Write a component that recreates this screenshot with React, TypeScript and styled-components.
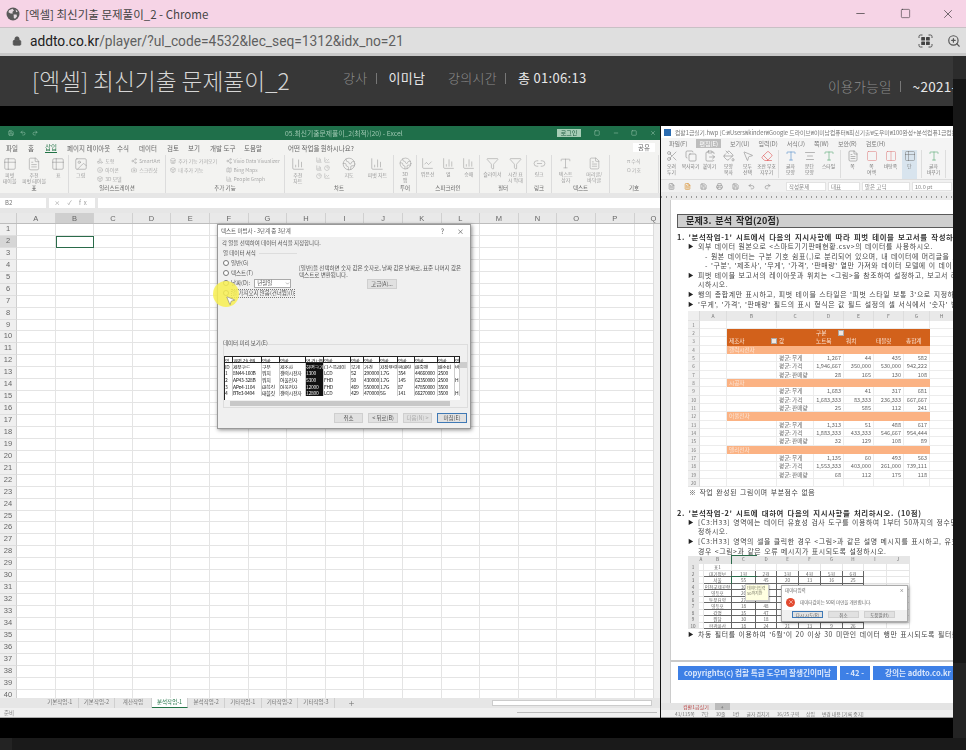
import * as React from 'react';
import styled, { createGlobalStyle } from 'styled-components';
import {
  BarChart3, Camera, ChevronDown, ClipboardPaste, Copy, FileText, Globe2, Image, Link2, LineChart, Lock, Map, Minus,
  MousePointer2, PaintBucket, PieChart, Plus, Printer, Save, Scissors, Share2, Shapes, Square, Table2, Type, X, ZoomIn,
  Filter, Columns2, Box, Store, Smile, Undo2, Redo2, AlignCenter, Eraser,
} from 'lucide-react';

const kr = `"Noto Sans CJK KR", "Noto Sans", sans-serif`;

const Global = createGlobalStyle`
  html, body { margin: 0; padding: 0; background: #1a1a1a; }
  body { font-family: ${kr}; }
  * { box-sizing: border-box; }
`;

const Page = styled.div`
  width: 966px;
  height: 750px;
  overflow: hidden;
  display: flex;
  flex-direction: column;
`;

/* ---------- chrome ---------- */
const TitleBar = styled.div`
  height: 28px;
  flex: none;
  background: #f6d4e6;
  border-bottom: 1px solid #c9c0c5;
  display: flex;
  align-items: center;
  padding-left: 6px;
  color: #444;
  font-size: 11.5px;
`;
const TabTitle = styled.span`
  margin-left: 5px;
  flex: 1;
`;
const WinButton = styled.div`
  width: 44px;
  padding-right: 11px;
  display: flex;
  justify-content: flex-end;
  color: #2a2a2a;
`;
const UrlBar = styled.div`
  height: 28px;
  flex: none;
  background: #dfdfdf;
  border-bottom: 3px solid #c8c8c8;
  display: flex;
  align-items: center;
  padding: 0 5px 0 12px;
  color: #5f5f5f;
  font-size: 13.75px;
  font-family: "Roboto", sans-serif;
`;
const UrlText = styled.span`
  margin-left: 8px;
  flex: 1;
  b { font-weight: 400; color: #222; }
`;
const UrlIcon = styled.div`
  margin-left: 14px;
  display: flex;
  color: #555;
`;

/* ---------- player ---------- */
const Stage = styled.div`
  flex: none;
  display: flex;
  height: 682px;
`;
const Main = styled.div`
  width: 953px;
  flex: none;
  display: flex;
  flex-direction: column;
  overflow: hidden;
`;
const Side = styled.div`
  flex: 1;
  display: flex;
  flex-direction: column;
`;
const SideBlock = styled.div<{ $h: number; $c: string }>`
  height: ${p => p.$h}px;
  background: ${p => p.$c};
`;
const PlayerHead = styled.div`
  height: 50px;
  flex: none;
  background: #373737;
  display: flex;
  align-items: flex-start;
  white-space: nowrap;
  color: #8c8c8c;
  font-size: 13px;
`;
const LessonTitle = styled.h1`
  margin: 9px 0 0 32px;
  width: 311px;
  flex: none;
  font-size: 22.7px;
  line-height: 32px;
  font-weight: 300;
  color: #d6d6d6;
`;
const Meta = styled.div<{ $w: number; $top: number; $size?: number }>`
  width: ${p => p.$w}px;
  flex: none;
  margin-top: ${p => p.$top}px;
  display: flex;
  align-items: center;
  line-height: 18px;
  font-size: ${p => p.$size ?? 13}px;
  font-weight: 300;
  letter-spacing: 0.3px;
`;
const MetaSep = styled.i`
  display: block;
  width: 1px;
  height: 11px;
  margin: 0 12px 0 8px;
  background: #777;
`;
const MetaValue = styled.b`
  font-weight: 400;
  color: #e8e8e8;
`;
const Gap = styled.div`
  height: 20px;
  flex: none;
  background: #000;
`;
const Video = styled.div`
  height: 592px;
  flex: none;
  display: flex;
  background: #111;
`;
const Bottom = styled.div`
  flex: 1;
  display: flex;
  background: #1a1a1a;
`;
const BottomLeft = styled.div`
  width: 12px;
  background: #232323;
`;

/* ---------- excel ---------- */
const Excel = styled.div`
  position: relative;
  width: 660px;
  flex: none;
  display: flex;
  flex-direction: column;
  overflow: hidden;
  background: #fff;
  filter: blur(0.55px);
  font-size: 6px;
  color: #777;
`;
const XlTitle = styled.div`
  height: 14px;
  flex: none;
  background: #1f6f4a;
  color: #9fc8b2;
  display: flex;
  align-items: center;
  padding-left: 8px;
  gap: 6px;
`;
const XlFileName = styled.span`
  margin-left: 241px;
  width: 266px;
  font-size: 6.8px;
`;
const LoginButton = styled.span`
  width: 24px;
  height: 8px;
  margin-right: 7px;
  background: #a7cdb6;
  color: #1f5c40;
  text-align: center;
  line-height: 8px;
`;
const XlWinIcons = styled.div`
  display: flex;
  gap: 12.5px;
`;
const XlTabs = styled.div`
  height: 15px;
  flex: none;
  background: #f3f3f1;
  display: flex;
  align-items: center;
  padding-left: 6px;
  font-size: 6.5px;
  color: #666;
  white-space: nowrap;
`;
const XlTab = styled.span<{ $w: number; $active?: boolean }>`
  width: ${p => p.$w}px;
  flex: none;
  span {
    display: inline-block;
    border-bottom: ${p => (p.$active ? '1px solid #217346' : 'none')};
    color: ${p => (p.$active ? '#217346' : 'inherit')};
    line-height: 9px;
  }
`;
const ShareBox = styled.span`
  margin-left: auto;
  margin-right: 5px;
  width: 22px;
  text-align: center;
  background: #fff;
  line-height: 9px;
`;
const XlRibbon = styled.div`
  height: 38px;
  flex: none;
  background: #f3f3f1;
  display: flex;
`;
const Group = styled.div<{ $w: number }>`
  width: ${p => p.$w}px;
  flex: none;
  display: flex;
  flex-direction: column;
  border-right: 1px solid #dcdcdc;
`;
const GroupBody = styled.div`
  flex: 1;
  display: flex;
  justify-content: space-around;
  overflow: hidden;
  padding-top: 2px;
  color: #9a9a9a;
`;
const GroupLabel = styled.div`
  height: 9px;
  text-align: center;
  line-height: 9px;
  font-size: 5.5px;
  color: #666;
  white-space: nowrap;
`;
const Tool = styled.div`
  display: flex;
  flex-direction: column;
  align-items: center;
  font-size: 5px;
  line-height: 6px;
  text-align: center;
  color: #999;
  white-space: pre;
  svg { margin-bottom: 1px; }
`;
const SmallCol = styled.div`
  display: flex;
  flex-direction: column;
  gap: 2px;
`;
const SmallTool = styled.div`
  display: flex;
  align-items: center;
  gap: 2px;
  font-size: 5px;
  line-height: 7px;
  color: #aaa;
  white-space: nowrap;
`;
const Band = styled.div<{ $h: number }>`
  height: ${p => p.$h}px;
  flex: none;
  background: #e6e6e6;
`;
const Formula = styled.div`
  height: 10px;
  flex: none;
  background: #e6e6e6;
  display: flex;
  gap: 3px;
  align-items: stretch;
  font-size: 6px;
`;
const NameBox = styled.div`
  width: 46px;
  padding-left: 5px;
  background: #fff;
  line-height: 10px;
`;
const FxBox = styled.div<{ $w?: number }>`
  width: ${p => (p.$w ? `${p.$w}px` : 'auto')};
  flex: ${p => (p.$w ? 'none' : 1)};
  background: #fff;
  text-align: center;
  line-height: 10px;
  color: #999;
  letter-spacing: 3px;
`;
const ColHeader = styled.div`
  height: 11px;
  flex: none;
  display: flex;
  background: #e9e9e9;
  border-bottom: 1px solid #bdbdbd;
`;
const Corner = styled.div`
  width: 17px;
  flex: none;
  border-right: 1px solid #ccc;
`;
const ColName = styled.div<{ $on?: boolean }>`
  width: 38.6px;
  flex: none;
  text-align: center;
  font-family: "Liberation Sans", sans-serif;
  font-size: 7.5px;
  line-height: 11px;
  color: #666;
  background: ${p => (p.$on ? '#cfcfcf' : 'transparent')};
  border-right: 1px solid #d0d0d0;
`;
const SheetArea = styled.div`
  height: 474px;
  flex: none;
  display: flex;
  overflow: hidden;
`;
const Rows = styled.div`
  flex: 1;
  overflow: hidden;
`;
const Row = styled.div`
  height: 11.95px;
  display: flex;
`;
const RowHead = styled.div<{ $on?: boolean }>`
  width: 17px;
  flex: none;
  background: ${p => (p.$on ? '#d6d6d6' : '#efefef')};
  border-right: 1px solid #cfcfcf;
  border-bottom: 1px solid #dedede;
  text-align: center;
  font-family: "Liberation Sans", sans-serif;
  font-size: 7.5px;
  line-height: 8px;
  padding-top: 1px;
  color: #666;
`;
const Cell = styled.div<{ $on?: boolean }>`
  width: 38.6px;
  flex: none;
  border-right: 1px solid #e4e4e4;
  border-bottom: 1px solid #e4e4e4;
  outline: ${p => (p.$on ? '1.5px solid #2a6b4a' : 'none')};
  outline-offset: -1px;
`;
const VScroll = styled.div`
  width: 7px;
  flex: none;
  background: #f0f0f0;
  border-left: 1px solid #ddd;
`;
const SheetTabs = styled.div`
  height: 10px;
  flex: none;
  background: #e6e6e6;
  display: flex;
  align-items: center;
  padding-left: 42px;
  font-size: 5.5px;
  color: #777;
`;
const SheetTab = styled.div<{ $active?: boolean }>`
  width: 36.6px;
  height: 10px;
  line-height: 9px;
  text-align: center;
  white-space: nowrap;
  border-right: 1px solid #cfcfcf;
  background: ${p => (p.$active ? '#fff' : 'transparent')};
  border-bottom: ${p => (p.$active ? '1px solid #217346' : 'none')};
  color: ${p => (p.$active ? '#217346' : 'inherit')};
`;
const AddSheet = styled.span`
  margin-left: 13px;
  display: flex;
`;
const HScroll = styled.div`
  width: 160px;
  height: 6px;
  margin-left: auto;
  margin-right: 8px;
  background: #fff;
  border: 1px solid #ccc;
`;
const XlStatus = styled.div`
  height: 10px;
  flex: none;
  background: #f0f0f0;
  border-bottom: 1px solid #aaa;
  display: flex;
  align-items: center;
  padding-left: 4px;
  font-size: 5.5px;
  color: #888;
  gap: 8px;
`;
const ZoomBar = styled.div`
  margin-left: auto;
  margin-right: 3px;
  width: 140px;
  height: 1px;
  background: #bbb;
`;

/* ---------- dialog ---------- */
const Dialog = styled.div`
  position: absolute;
  left: 217px;
  top: 98px;
  width: 254px;
  height: 205px;
  background: #f0f0f0;
  border: 1px solid #999;
  box-shadow: 1px 1px 4px rgba(0, 0, 0, 0.45);
  color: #555;
  font-size: 5.5px;
  line-height: 8px;
  display: flex;
  flex-direction: column;
  white-space: nowrap;
`;
const DialogTitle = styled.div`
  height: 12px;
  flex: none;
  background: #fff;
  display: flex;
  align-items: center;
  padding: 0 6px 0 3px;
`;
const DialogClose = styled.span`
  margin-left: auto;
  display: flex;
  gap: 13px;
  font-size: 7px;
`;
const Instruction = styled.div`
  margin: 2px 0 2px 4px;
`;
const Legend = styled.div`
  margin-left: 5px;
  display: flex;
  align-items: center;
  gap: 3px;
  &::after { content: ''; width: 38px; height: 1px; background: #ddd; }
`;
const OptionsRow = styled.div`
  height: 82px;
  flex: none;
  display: flex;
`;
const Options = styled.div`
  width: 81px;
  flex: none;
  padding: 1px 0 0 5px;
`;
const Option = styled.div<{ $dotted?: boolean }>`
  height: 10px;
  display: flex;
  align-items: center;
  gap: 2px;
  span { border: ${p => (p.$dotted ? '1px dotted #777' : 'none')}; line-height: 7px; }
`;
const Radio = styled.i`
  display: block;
  width: 6px;
  height: 6px;
  border-radius: 50%;
  background: #fff;
  border: 1px solid #777;
`;
const SelectBox = styled.div`
  width: 37px;
  height: 9px;
  margin-left: 2px;
  padding-left: 2px;
  background: #fff;
  border: 1px solid #aaa;
  display: flex;
  align-items: center;
  justify-content: space-between;
`;
const Description = styled.div`
  padding-top: 8px;
  line-height: 6.5px;
  white-space: pre;
  font-size: 5.55px;
`;
const FlatButton = styled.div<{ $w: number; $primary?: boolean; $off?: boolean }>`
  width: ${p => p.$w}px;
  height: 10px;
  background: #e1e1e1;
  border: 1px solid ${p => (p.$primary ? '#3f79b5' : '#cfcfcf')};
  color: ${p => (p.$off ? '#aaa' : '#555')};
  text-align: center;
  line-height: 8px;
  white-space: nowrap;
`;
const AdvancedWrap = styled.div`
  margin: 1px 0 0 68px;
`;
const PreviewLabel = styled.div`
  position: relative;
  margin: 0 0 -3px 5px;
  height: 8px;
  line-height: 8px;
`;
const PreviewBox = styled.div`
  margin: 0 2px 0 5px;
  height: 64px;
  flex: none;
  border: 1px solid #ddd;
  padding-top: 11px;
  display: flex;
`;
const PreviewBody = styled.div`
  width: 236px;
`;
const PreviewGrid = styled.div`
  display: grid;
  grid-template-columns: 8px 29px 18px 26px 18px 27px 13px 16px 18px 17px 23px 17px 5px;
  grid-auto-rows: 6.7px;
  height: 44px;
  overflow: hidden;
  background: #fff;
  font-size: 5px;
  line-height: 7px;
  letter-spacing: -0.3px;
  color: #222;
  border-left: 1px solid #222;
`;
const PreviewCell = styled.div<{ $head?: boolean; $black?: boolean }>`
  white-space: nowrap;
  background: ${p => (p.$black ? '#111' : '#fff')};
  color: ${p => (p.$black ? '#eee' : '#222')};
  border-right: ${p => (p.$head ? '1px solid #222' : '1px solid #ccc')};
  border-top: ${p => (p.$head ? '1px solid #222' : 'none')};
  border-bottom: ${p => (p.$head ? '1px solid #222' : 'none')};
`;
const PreviewScroll = styled.div`
  height: 5px;
  margin: 1px 10px 0 6px;
  background: #c8c8c8;
`;
const PreviewV = styled.div`
  width: 7px;
  height: 44px;
  background: #f0f0f0;
  &::after { content: ''; display: block; height: 6px; margin-top: 6px; background: #cdcdcd; }
`;
const DialogFoot = styled.div`
  margin-top: 5px;
  padding-left: 116px;
  display: flex;
  gap: 5px;
`;
const Highlight = styled.div`
  position: absolute;
  left: -5px;
  top: 56px;
  width: 26px;
  height: 26px;
  border-radius: 50%;
  background: rgba(247, 238, 80, 0.85);
`;
const Pointer = styled.div`
  position: absolute;
  left: 7px;
  top: 70px;
  color: #555;
  display: flex;
`;

/* ---------- hwp ---------- */
const Hwp = styled.div`
  margin-left: 1px;
  flex: 1;
  min-width: 0;
  display: flex;
  flex-direction: column;
  overflow: hidden;
  background: #fff;
  filter: blur(0.5px);
  font-size: 6px;
  color: #666;
`;
const HwpTitle = styled.div`
  height: 12px;
  flex: none;
  padding-left: 3px;
  background: #fff;
  display: flex;
  align-items: center;
  gap: 4px;
  font-size: 5.8px;
  color: #777;
  white-space: nowrap;
`;
const HwpLogo = styled.i`
  display: block;
  width: 7px;
  height: 7px;
  flex: none;
  background: #2a6bb0;
`;
const HwpMenu = styled.div`
  height: 10px;
  flex: none;
  display: flex;
  align-items: center;
  padding-left: 8px;
  gap: 9px;
  background: #f4f4f4;
  font-size: 6px;
  color: #777;
  white-space: nowrap;
`;
const MenuItem = styled.span<{ $on?: boolean }>`
  padding: 0 3px;
  line-height: 9px;
  background: ${p => (p.$on ? '#bdbdbd' : 'transparent')};
  color: ${p => (p.$on ? '#fff' : 'inherit')};
`;
const HwpRibbon = styled.div`
  height: 32px;
  flex: none;
  display: flex;
  align-items: flex-start;
  gap: 4px;
  padding: 2px 0 0 3px;
  background: #f4f4f4;
  border-bottom: 1px solid #ddd;
`;
const HwpTool = styled(Tool)<{ $on?: boolean }>`
  width: 15px;
  height: 29px;
  flex: none;
  font-size: 4.8px;
  color: #777;
  background: ${p => (p.$on ? '#d8e4ee' : 'transparent')};
`;
const HwpSep = styled.i`
  display: block;
  width: 1px;
  height: 28px;
  flex: none;
  background: #ddd;
`;
const HwpToolbar = styled.div`
  height: 12px;
  flex: none;
  display: flex;
  align-items: center;
  gap: 9px;
  padding: 0 1px 0 7px;
  background: #f1f1f1;
  color: #888;
  font-size: 5.5px;
  white-space: nowrap;
`;
const ToolFields = styled.div`
  margin-left: auto;
  display: flex;
  gap: 2px;
`;
const ToolField = styled.div<{ $w: number }>`
  width: ${p => p.$w}px;
  flex: none;
  height: 9px;
  line-height: 8px;
  padding-left: 2px;
  background: #fff;
  border: 1px solid #e2e2e2;
  overflow: hidden;
`;
const Ruler = styled.div`
  height: 8px;
  flex: none;
  background: repeating-linear-gradient(90deg, #999 0 1px, transparent 1px 5px) 0 4px / 100% 2px no-repeat, #eaeaea;
`;
const DocArea = styled.div`
  height: 503px;
  flex: none;
  display: flex;
  overflow: hidden;
  background: #fff;
`;
const DocMargin = styled.div`
  width: 10px;
  flex: none;
  background: #e9e9e9;
  border-right: 1px solid #ccc;
`;
const Sheet = styled.div`
  position: relative;
  flex: 1;
  min-width: 0;
  padding: 14px 0 0 6px;
  overflow: hidden;
  color: #444;
  white-space: nowrap;
`;
const Heading = styled.div`
  height: 14px;
  width: 300px;
  padding-left: 8px;
  background: #cfcfcf;
  border: 1px solid #5a5a5a;
  color: #222;
  font-size: 9px;
  font-weight: 700;
  line-height: 12px;
  letter-spacing: 0.2px;
  word-spacing: 1.5px;
`;
const Question = styled.div<{ $top: number }>`
  margin-top: ${p => p.$top}px;
  height: 10px;
  font-size: 7.4px;
  font-weight: 700;
  line-height: 10px;
  color: #333;
  letter-spacing: 0.6px;
  word-spacing: 1.3px;
`;
const Line = styled.div<{ $indent?: number; $bullet?: boolean }>`
  position: relative;
  height: 9.6px;
  line-height: 9.6px;
  font-size: 6.9px;
  letter-spacing: 0.6px;
  word-spacing: 0.8px;
  padding-left: ${p => p.$indent ?? 21}px;
  &::before {
    content: '${p => (p.$bullet ? '▶' : '')}';
    position: absolute;
    left: 11px;
    font-size: 5.5px;
    color: #222;
  }
`;
const Note = styled(Line)`
  margin-top: 1px;
  height: 9.6px;
  padding-left: 12px;
`;
const Pivot = styled.div`
  margin: 2px 0 0 11px;
  width: 266px;
  display: grid;
  grid-template-columns: 12px 27px 50px 37px 30px 30px 30px 26px 24px;
  grid-template-rows: 9.5px repeat(20, 8.33px);
  font-size: 5.6px;
  line-height: 8.2px;
`;
const PivotHead = styled.div`
  background: #e9e9e9;
  text-align: center;
  color: #777;
  font-size: 5px;
  line-height: 9.5px;
  border-right: 1px solid #ddd;
`;
const PivotNum = styled.div`
  background: #efefef;
  text-align: center;
  font-size: 4.6px;
  color: #777;
  border-bottom: 1px solid #e2e2e2;
  border-right: 1px solid #d8d8d8;
`;
const PivotCell = styled.div<{ $tone?: 'dark' | 'light'; $right?: boolean }>`
  position: relative;
  background: ${p => (p.$tone === 'dark' ? '#d2611b' : p.$tone === 'light' ? '#fbb283' : '#fff')};
  color: ${p => (p.$tone ? '#fbe6d8' : '#666')};
  text-align: ${p => (p.$right ? 'right' : 'left')};
  padding: 0 2px;
  border-right: ${p => (p.$tone ? 'none' : '1px solid #ececec')};
  border-bottom: ${p => (p.$tone ? 'none' : '1px solid #ececec')};
`;
const FilterBtn = styled.i`
  position: absolute;
  right: 0;
  top: 1px;
  width: 6px;
  height: 6px;
  background: #f1e7e0;
  border: 1px solid #aaa;
`;
const SmallSheetWrap = styled.div`
  position: relative;
  margin: 0 0 1px 11px;
  width: 222px;
  height: 73px;
`;
const SmallSheet = styled.div`
  display: grid;
  grid-template-columns: 11px 5px 28px 24px 21px 22px 22px 22px 21px 23px 23px;
  grid-template-rows: 8px repeat(10, 6.5px);
  font-size: 4.6px;
  line-height: 6.3px;
  color: #666;
`;
const SmallCell = styled.div<{ $head?: boolean; $box?: boolean; $sel?: boolean }>`
  text-align: center;
  white-space: nowrap;
  background: ${p => (p.$head ? '#e6e6e6' : '#fff')};
  border-right: 1px solid ${p => (p.$box ? '#666' : '#e6e6e6')};
  border-bottom: 1px solid ${p => (p.$box ? '#666' : '#e6e6e6')};
  outline: ${p => (p.$sel ? '1px solid #2a6b4a' : 'none')};
`;
const InputTip = styled.div`
  position: absolute;
  left: 57px;
  top: 28px;
  width: 24px;
  height: 17px;
  background: #ffffe1;
  border: 1px solid #ccc;
  padding: 1px;
  font-size: 4px;
  line-height: 5px;
  color: #776;
  box-shadow: 1px 1px 1px rgba(0, 0, 0, 0.2);
`;
const ErrorBox = styled.div`
  position: absolute;
  left: 93px;
  top: 29px;
  width: 127px;
  height: 37px;
  background: #fff;
  border: 1px solid #aaa;
  box-shadow: 1px 1px 3px rgba(0, 0, 0, 0.4);
  font-size: 4.5px;
  color: #666;
  display: flex;
  flex-direction: column;
`;
const ErrorTitle = styled.div`
  height: 8px;
  padding: 0 3px;
  display: flex;
  justify-content: space-between;
  line-height: 8px;
`;
const ErrorMessage = styled.div`
  flex: 1;
  display: flex;
  align-items: center;
  gap: 5px;
  padding-left: 4px;
`;
const ErrorDot = styled.i`
  display: flex;
  align-items: center;
  justify-content: center;
  width: 9px;
  height: 9px;
  border-radius: 50%;
  background: #e2492f;
  color: #fff;
`;
const ErrorButtons = styled.div`
  height: 11px;
  flex: none;
  background: #f0f0f0;
  display: flex;
  gap: 5px;
  padding: 1px 0 0 10px;
`;
const ErrorButton = styled.div<{ $primary?: boolean }>`
  width: 31px;
  height: 7px;
  line-height: 6px;
  text-align: center;
  background: #e1e1e1;
  border: 1px solid ${p => (p.$primary ? '#3f79b5' : '#d0d0d0')};
`;
const FootRule = styled.div`
  margin: 20px 0 0 -6px;
  height: 2px;
  background: #c9c9c9;
`;
const FootRow = styled.div`
  margin-top: 4px;
  padding-left: 1px;
  display: flex;
  gap: 3px;
`;
const FootBlock = styled.div<{ $w: number }>`
  width: ${p => p.$w}px;
  flex: none;
  height: 14px;
  background: #3e80e6;
  color: #dbe7fb;
  font-size: 7.6px;
  font-weight: 700;
  line-height: 14px;
  text-align: center;
`;
const HwpTabs = styled.div`
  height: 7px;
  flex: none;
  background: #e4e4e4;
  display: flex;
  align-items: center;
  padding-left: 22px;
  font-size: 5px;
  color: #b44;
`;
const HwpTabAdd = styled.span`
  margin-left: 6px;
  padding: 0 6px;
  background: #bbb;
  color: #555;
  line-height: 7px;
`;
const HwpStatus = styled.div`
  height: 8px;
  flex: none;
  background: #efefef;
  border-bottom: 1px solid #999;
  display: flex;
  align-items: center;
  gap: 7px;
  padding-left: 14px;
  font-size: 4.8px;
  color: #777;
  white-space: nowrap;
`;

/* ---------- data ---------- */
const letters = 'ABCDEFGHIJKLMNOPQ'.split('');
const tabs: [string, number, boolean?][] = [
  ['파일', 22], ['홈', 17], ['삽입', 22, true], ['페이지 레이아웃', 50], ['수식', 22], ['데이터', 28], ['검토', 21], ['보기', 22],
  ['개발 도구', 34], ['도움말', 34], ['', 10], ['어떤 작업을 원하시나요?', 80],
];
const sheets = ['기본작업-1', '기본작업-2', '계산작업', '분석작업-1', '분석작업-2', '기타작업-1', '기타작업-2', '기타작업-3'];
const previewRows = [
  ['일', '개별 건너뜀', '일반', '일반', '열 건너뜀', '일반', '일반', '일반', '일반', '일반', '일반', '일반', '일'],
  ['ID', '제품코드', '구분', '제조사', '화면크기', '디스플레이', '무게', '가격', '저장용량', '판매량', '매출액', '배송비', '반'],
  ['1', '8N44-160B', '워치', '갤럭시전자', '1300', 'LCD', '52', '290000', '1.7G', '354', '44660000', '2500', ''],
  ['2', 'AP43-328B', '워치', '어울전자', '5300', 'FHD', '50', '430000', '1.7G', '145', '62350000', '2500', 'H'],
  ['3', 'APe4-1104', '태블릿', '어울전자', '12000', 'FHD', '469', '550000', '1.7G', '87', '47850000', '3500', ''],
  ['4', 'BTe3-0404', '태블릿', '갤럭시전자', '12800', 'LCD', '429', '470000', '5G', '141', '66270000', '3500', 'H'],
];
const pivotGroups: [string, string[][]][] = [
  ['갤럭시전자', [['평균: 무게', '1,267', '44', '435', '582'], ['평균: 가격', '1,946,667', '350,000', '530,000', '942,222'], ['평균: 판매량', '28', '165', '130', '108']]],
  ['시공자', [['평균: 무게', '1,683', '41', '317', '681'], ['평균: 가격', '1,683,333', '83,333', '236,333', '667,667'], ['평균: 판매량', '25', '585', '112', '241']]],
  ['어울전자', [['평균: 무게', '1,313', '51', '488', '617'], ['평균: 가격', '1,883,333', '433,333', '546,667', '954,444'], ['평균: 판매량', '32', '129', '108', '89']]],
  ['델리전자', [['평균: 무게', '1,135', '60', '493', '563'], ['평균: 가격', '1,553,333', '403,000', '261,000', '739,111'], ['평균: 판매량', '68', '112', '175', '118']]],
];
const smallRows = [
  ['', '표1', '', '', '', '', '', '', '', ''],
  ['', '대기정보', '1월', '2월', '3월', '4월', '5월', '6월', '', ''],
  ['', '서울', '55', '45', '20', '13', '16', '25', '', ''],
  ['', '인천국제공항', '30', '', '', '', '', '', '', ''],
  ['', '영등포', '26', '', '', '', '', '', '', ''],
  ['', '동북요양', '27', '', '', '', '', '', '', ''],
  ['', '영등포', '18', '48', '', '', '', '', '', ''],
  ['', '강명', '35', '47', '', '', '', '', '', ''],
  ['', '원당', '30', '18', '', '', '', '', '', ''],
  ['', '판관마산', '18', '24', '21', '13', '9', '26', '', ''],
];

function GlobeIcon() {
  return (
    <svg width="14" height="14" viewBox="0 0 14 14">
      <circle cx="7" cy="7" r="6.5" fill="#5a5a5a" />
      <path d="M3 3.2 6.5 1.8 8 3.4 6.4 5 6.8 6.4 4.6 6.6 2.4 5.2Z" fill="#e6dbe1" />
      <path d="M7.6 7.4 10.6 7.6 11 9.6 8.8 12 7.8 10.2Z" fill="#e6dbe1" />
      <path d="M9.6 2.6 11.8 4.6 10.2 5.2Z" fill="#e6dbe1" />
    </svg>
  );
}

function ScanIcon() {
  return (
    <svg width="15" height="14" viewBox="0 0 15 14" fill="none" stroke="#555" strokeWidth="1">
      <path d="M1 4V2.5Q1 1 2.5 1H4.5M10.5 1H12.5Q14 1 14 2.5V4M14 10V11.5Q14 13 12.5 13H10.5M4.5 13H2.5Q1 13 1 11.5V10" />
      <g fill="#444" stroke="none">
        <rect x="3.2" y="3" width="3.8" height="3.5" rx=".6" />
        <rect x="8" y="3" width="3.8" height="3.5" rx=".6" />
        <rect x="3.2" y="7.5" width="3.8" height="3.5" rx=".6" />
        <rect x="8" y="7.5" width="3.8" height="3.5" rx=".6" />
      </g>
    </svg>
  );
}

function PivotSheet() {
  const blank = (k: string) => <PivotCell key={k} />;
  const rows: React.ReactNode[] = [];
  let n = 5;
  pivotGroups.forEach(([name, lines], g) => {
    const hn = n - 1;
    rows.push(
      <PivotNum key={`n${hn}`}>{hn}</PivotNum>, blank(`a${hn}`),
      <PivotCell key={`b${hn}`} $tone="light">{name}</PivotCell>,
      ...[0, 1, 2, 3, 4].map(i => <PivotCell key={`l${g}${i}`} $tone="light" />),
      blank(`h${hn}`),
    );
    lines.forEach(l => {
      const r = n++;
      rows.push(
        <PivotNum key={`n${r}`}>{r}</PivotNum>, blank(`a${r}`), blank(`b${r}`),
        ...l.map((v, i) => <PivotCell key={`c${r}${i}`} $right={i > 0}>{v}</PivotCell>),
        blank(`h${r}`),
      );
    });
    n++;
  });
  return (
    <Pivot>
      <PivotNum />
      {letters.slice(0, 8).map(l => <PivotHead key={l}>{l}</PivotHead>)}
      <PivotNum>1</PivotNum>
      {letters.slice(0, 8).map(l => <PivotCell key={`r1${l}`} />)}
      <PivotNum>2</PivotNum>
      <PivotCell />
      <PivotCell $tone="dark" /><PivotCell $tone="dark" />
      <PivotCell $tone="dark">구분<FilterBtn /></PivotCell>
      <PivotCell $tone="dark" /><PivotCell $tone="dark" /><PivotCell $tone="dark" />
      <PivotCell />
      <PivotNum>3</PivotNum>
      <PivotCell />
      <PivotCell $tone="dark">제조사<FilterBtn /></PivotCell>
      <PivotCell $tone="dark">값</PivotCell>
      <PivotCell $tone="dark">노트북</PivotCell>
      <PivotCell $tone="dark">워치</PivotCell>
      <PivotCell $tone="dark">태블릿</PivotCell>
      <PivotCell $tone="dark">총합계</PivotCell>
      <PivotCell />
      {rows}
      <PivotNum>20</PivotNum>
      {letters.slice(0, 8).map(l => <PivotCell key={`r20${l}`} />)}
    </Pivot>
  );
}

export default function App() {
  return (
    <Page>
      <Global />
      <TitleBar>
        <GlobeIcon />
        <TabTitle>[엑셀] 최신기출 문제풀이_2 - Chrome</TabTitle>
        <WinButton><Minus size={13} strokeWidth={1.2} /></WinButton>
        <WinButton><Square size={11} strokeWidth={1.2} /></WinButton>
        <WinButton><X size={14} strokeWidth={1.1} /></WinButton>
      </TitleBar>
      <UrlBar>
        <Lock size={10} fill="#555" color="#555" />
        <UrlText><b>addto.co.kr</b>/player/?ul_code=4532&amp;lec_seq=1312&amp;idx_no=21</UrlText>
        <UrlIcon><ScanIcon /></UrlIcon>
        <UrlIcon><ZoomIn size={14} /></UrlIcon>
      </UrlBar>
      <Stage>
        <Main>
          <PlayerHead>
            <LessonTitle>[엑셀] 최신기출 문제풀이_2</LessonTitle>
            <Meta $w={105} $top={13}>강사<MetaSep /><MetaValue>이미남</MetaValue></Meta>
            <Meta $w={380} $top={13}>강의시간<MetaSep /><MetaValue>총 01:06:13</MetaValue></Meta>
            <Meta $w={140} $top={21} $size={13.5}>이용가능일<MetaSep /><MetaValue>~2021-</MetaValue></Meta>
          </PlayerHead>
          <Gap />
          <Video>
            <Excel>
              <XlTitle>
                <Save size={6} /><Undo2 size={6} /><Redo2 size={6} />
                <XlFileName>05.최신기출문제풀이_2(최적)(20) - Excel</XlFileName>
                <LoginButton>로그인</LoginButton>
                <XlWinIcons>
                  <Square size={6} /><Minus size={6} /><Square size={6} /><X size={6} />
                </XlWinIcons>
              </XlTitle>
              <XlTabs>
                {tabs.map(([t, w, on], i) => (
                  <XlTab key={i} $w={w} $active={on}><span>{t}</span></XlTab>
                ))}
                <ShareBox>공유</ShareBox>
              </XlTabs>
              <XlRibbon>
                <Group $w={69}>
                  <GroupBody>
                    <Tool><Table2 size={14} strokeWidth={1} />{'피벗\n테이블'}</Tool>
                    <Tool><FileText size={14} strokeWidth={1} />{'추천\n피벗 테이블'}</Tool>
                    <Tool><Table2 size={14} strokeWidth={1} />표</Tool>
                  </GroupBody>
                  <GroupLabel>표</GroupLabel>
                </Group>
                <Group $w={97}>
                  <GroupBody>
                    <Tool><Image size={14} strokeWidth={1} />그림</Tool>
                    <SmallCol>
                      <SmallTool><Shapes size={6} />도형</SmallTool>
                      <SmallTool><Smile size={6} />아이콘</SmallTool>
                      <SmallTool><Box size={6} />3D 모델</SmallTool>
                    </SmallCol>
                    <SmallCol>
                      <SmallTool><Share2 size={6} />SmartArt</SmallTool>
                      <SmallTool><Camera size={6} />스크린샷</SmallTool>
                    </SmallCol>
                  </GroupBody>
                  <GroupLabel>일러스트레이션</GroupLabel>
                </Group>
                <Group $w={119}>
                  <GroupBody>
                    <SmallCol>
                      <SmallTool><Store size={6} />추가 기능 가져오기</SmallTool>
                      <SmallTool><Box size={6} />내 추가 기능</SmallTool>
                    </SmallCol>
                    <SmallCol>
                      <SmallTool><Share2 size={6} />Visio Data Visualizer</SmallTool>
                      <SmallTool><Map size={6} />Bing Maps</SmallTool>
                      <SmallTool><BarChart3 size={6} />People Graph</SmallTool>
                    </SmallCol>
                  </GroupBody>
                  <GroupLabel>추가 기능</GroupLabel>
                </Group>
                <Group $w={109}>
                  <GroupBody>
                    <Tool><BarChart3 size={14} strokeWidth={1} />{'추천\n차트'}</Tool>
                    <SmallCol>
                      <SmallTool><BarChart3 size={6} /><LineChart size={6} /></SmallTool>
                      <SmallTool><BarChart3 size={6} /><PieChart size={6} /></SmallTool>
                      <SmallTool><PieChart size={6} /><LineChart size={6} /></SmallTool>
                    </SmallCol>
                    <Tool><Globe2 size={14} strokeWidth={1} />지도</Tool>
                    <Tool><BarChart3 size={14} strokeWidth={1} />피벗 차트</Tool>
                  </GroupBody>
                  <GroupLabel>차트</GroupLabel>
                </Group>
                <Group $w={23}>
                  <GroupBody><Tool><Globe2 size={13} strokeWidth={1} />{'3D\n맵'}</Tool></GroupBody>
                  <GroupLabel>투어</GroupLabel>
                </Group>
                <Group $w={63}>
                  <GroupBody>
                    <Tool><LineChart size={13} strokeWidth={1} />꺾은선</Tool>
                    <Tool><BarChart3 size={13} strokeWidth={1} />열</Tool>
                    <Tool><BarChart3 size={13} strokeWidth={1} />{'승패'}</Tool>
                  </GroupBody>
                  <GroupLabel>스파크라인</GroupLabel>
                </Group>
                <Group $w={47}>
                  <GroupBody>
                    <Tool><Filter size={13} strokeWidth={1} />슬라이서</Tool>
                    <Tool><Filter size={13} strokeWidth={1} />{'시간 표\n시 막대'}</Tool>
                  </GroupBody>
                  <GroupLabel>필터</GroupLabel>
                </Group>
                <Group $w={25}>
                  <GroupBody><Tool><Link2 size={13} strokeWidth={1} />링크</Tool></GroupBody>
                  <GroupLabel>링크</GroupLabel>
                </Group>
                <Group $w={58}>
                  <GroupBody>
                    <Tool><Type size={13} strokeWidth={1} />{'텍스트\n상자'}</Tool>
                    <Tool><FileText size={13} strokeWidth={1} />{'머리글/\n바닥글'}</Tool>
                  </GroupBody>
                  <GroupLabel>텍스트</GroupLabel>
                </Group>
                <Group $w={49}>
                  <GroupBody>
                    <SmallCol>
                      <SmallTool>π 수식</SmallTool>
                      <SmallTool>Ω 기호</SmallTool>
                    </SmallCol>
                  </GroupBody>
                  <GroupLabel>기호</GroupLabel>
                </Group>
              </XlRibbon>
              <Band $h={5} />
              <Formula>
                <NameBox>B2</NameBox>
                <FxBox $w={46}>× ✓ fx</FxBox>
                <FxBox />
              </Formula>
              <Band $h={5} />
              <ColHeader>
                <Corner />
                {letters.map(l => <ColName key={l} $on={l === 'B'}>{l}</ColName>)}
              </ColHeader>
              <SheetArea>
                <Rows>
                  {Array.from({ length: 40 }, (_, r) => (
                    <Row key={r}>
                      <RowHead $on={r === 1}>{r + 1}</RowHead>
                      {letters.map(l => <Cell key={l} $on={r === 1 && l === 'B'} />)}
                    </Row>
                  ))}
                </Rows>
                <VScroll />
              </SheetArea>
              <SheetTabs>
                {sheets.map((s, i) => <SheetTab key={s} $active={i === 3}>{s}</SheetTab>)}
                <AddSheet><Plus size={7} /></AddSheet>
                <HScroll />
              </SheetTabs>
              <XlStatus>
                <span>준비</span>
                <ZoomBar />
              </XlStatus>
              <Dialog>
                <DialogTitle>
                  텍스트 마법사 - 3단계 중 3단계
                  <DialogClose><span>?</span><span>×</span></DialogClose>
                </DialogTitle>
                <Instruction>각 열을 선택하여 데이터 서식을 지정합니다.</Instruction>
                <Legend>열 데이터 서식</Legend>
                <OptionsRow>
                  <Options>
                    <Option><Radio />일반(G)</Option>
                    <Option><Radio />텍스트(T)</Option>
                    <Option><Radio />날짜(D):<SelectBox>년월일<ChevronDown size={5} /></SelectBox></Option>
                    <Option $dotted><Radio /><span>열 가져오지 않음(건너뜀)(I)</span></Option>
                  </Options>
                  <div>
                    <Description>{'[일반]을 선택하면 숫자 값은 숫자로, 날짜 값은 날짜로, 표준 나머지 값은\n텍스트로 변환됩니다.'}</Description>
                    <AdvancedWrap><FlatButton $w={30}>고급(A)...</FlatButton></AdvancedWrap>
                  </div>
                </OptionsRow>
                <PreviewLabel>데이터 미리 보기(E)</PreviewLabel>
                <PreviewBox>
                  <PreviewBody>
                    <PreviewGrid>
                      {previewRows.flatMap((row, r) =>
                        row.map((v, c) => (
                          <PreviewCell key={`${r}-${c}`} $head={r === 0} $black={c === 4 && r > 0}>{v}</PreviewCell>
                        )),
                      )}
                    </PreviewGrid>
                    <PreviewScroll />
                  </PreviewBody>
                  <PreviewV />
                </PreviewBox>
                <DialogFoot>
                  <FlatButton $w={29}>취소</FlatButton>
                  <FlatButton $w={30}>&lt; 뒤로(B)</FlatButton>
                  <FlatButton $w={29} $off>다음(N) &gt;</FlatButton>
                  <FlatButton $w={30} $primary>마침(E)</FlatButton>
                </DialogFoot>
                <Highlight />
                <Pointer><MousePointer2 size={11} fill="#fff" strokeWidth={1} /></Pointer>
              </Dialog>
            </Excel>
            <Hwp>
              <HwpTitle>
                <HwpLogo />
                컴활1급실기.hwp [C:₩Users₩kinder₩Google 드라이브₩이미남컴퓨터₩최신기출₩도우미₩100완성+분석컴퓨1급컴활완성₩]
              </HwpTitle>
              <HwpMenu>
                <span>파일(F)</span>
                <MenuItem $on>편집(E)</MenuItem>
                <span>보기(U)</span>
                <span>입력(D)</span>
                <span>서식(J)</span>
                <span>쪽(W)</span>
                <span>보안(R)</span>
                <span>검토(H)</span>
              </HwpMenu>
              <HwpRibbon>
                <HwpTool><Scissors size={12} strokeWidth={1} />{'오려\n두기'}</HwpTool>
                <HwpTool><Copy size={12} strokeWidth={1} />복사하기</HwpTool>
                <HwpTool><ClipboardPaste size={12} strokeWidth={1} />붙이기</HwpTool>
                <HwpTool><PaintBucket size={12} strokeWidth={1} />{'모양\n복사'}</HwpTool>
                <HwpTool><MousePointer2 size={12} strokeWidth={1} />{'모두\n선택'}</HwpTool>
                <HwpTool><Eraser size={12} strokeWidth={1} color="#d33" />{'조판 부호\n지우기'}</HwpTool>
                <HwpSep />
                <HwpTool><Type size={12} strokeWidth={1} color="#3478c0" />{'글자\n모양'}</HwpTool>
                <HwpTool><AlignCenter size={12} strokeWidth={1} />{'문단\n모양'}</HwpTool>
                <HwpTool><Type size={12} strokeWidth={1} color="#3a9a5a" />스타일</HwpTool>
                <HwpSep />
                <HwpTool><FileText size={12} strokeWidth={1} />쪽</HwpTool>
                <HwpTool><Square size={12} strokeWidth={1} color="#d77" />{'쪽\n여백'}</HwpTool>
                <HwpTool><Columns2 size={12} strokeWidth={1} color="#d77" />바탕쪽</HwpTool>
                <HwpTool $on><Table2 size={12} strokeWidth={1} />단</HwpTool>
                <HwpSep />
                <HwpTool><Type size={12} strokeWidth={1} color="#3a9a5a" />{'글자\n바꾸기'}</HwpTool>
                <HwpSep />
                <HwpTool><Table2 size={12} strokeWidth={1} color="#3478c0" />표</HwpTool>
              </HwpRibbon>
              <HwpToolbar>
                <FileText size={7} />
                <FileText size={7} color="#d98a20" />
                <Save size={7} />
                <Printer size={7} />
                <Save size={7} />
                <Undo2 size={7} />
                <Redo2 size={7} />
                <ToolFields>
                  <ToolField $w={40}>작성문제</ToolField>
                  <ToolField $w={32}>대표</ToolField>
                  <ToolField $w={48}>맑은 고딕</ToolField>
                  <ToolField $w={40}>10.0 pt</ToolField>
                </ToolFields>
              </HwpToolbar>
              <Ruler />
              <DocArea>
                <DocMargin />
                <Sheet>
                  <Heading>문제3. 분석 작업(20점)</Heading>
                  <Question $top={4}>1. '분석작업-1' 시트에서 다음의 지시사항에 따라 피벗 테이블 보고서를 작성하시오.</Question>
                  <Line $bullet>외부 데이터 원본으로 &lt;스마트기기판매현황.csv&gt;의 데이터를 사용하시오.</Line>
                  <Line $indent={28}>- 원본 데이터는 구분 기호 쉼표(,)로 분리되어 있으며, 내 데이터에 머리글을 표시하시오.</Line>
                  <Line $indent={28}>- '구분', '제조사', '무게', '가격', '판매량' 열만 가져와 데이터 모델에 이 데이터를 추가</Line>
                  <Line $bullet>피벗 테이블 보고서의 레이아웃과 위치는 &lt;그림&gt;을 참조하여 설정하고, 보고서 레이아웃을 표</Line>
                  <Line>시하시오.</Line>
                  <Line $bullet>행의 총합계만 표시하고, 피벗 테이블 스타일은 '피벗 스타일 보통 3'으로 지정하시오.</Line>
                  <Line $bullet>'무게', '가격', '판매량' 필드의 표시 형식은 값 필드 설정의 셀 서식에서 '숫자' 범주를</Line>
                  <PivotSheet />
                  <Note>※ 작업 완성된 그림이며 부분점수 없음</Note>
                  <Question $top={10}>2. '분석작업-2' 시트에 대하여 다음의 지시사항을 처리하시오. (10점)</Question>
                  <Line $bullet>[C3:H33] 영역에는 데이터 유효성 검사 도구를 이용하여 1부터 50까지의 정수만 입력되도록 설</Line>
                  <Line>정하시오.</Line>
                  <Line $bullet>[C3:H33] 영역의 셀을 클릭한 경우 &lt;그림&gt;과 같은 설명 메시지를 표시하고, 유효하지 않은</Line>
                  <Line>경우 &lt;그림&gt;과 같은 오류 메시지가 표시되도록 설정하시오.</Line>
                  <SmallSheetWrap>
                    <SmallSheet>
                      <SmallCell $head />
                      {letters.slice(0, 10).map(l => <SmallCell key={l} $head $sel={l === 'C'}>{l}</SmallCell>)}
                      {smallRows.flatMap((row, r) => [
                        <SmallCell key={`h${r}`} $head>{r + 1}</SmallCell>,
                        ...row.map((v, c) => (
                          <SmallCell key={`${r}-${c}`} $box={r > 0 && c > 0 && c < 8} $sel={r === 2 && c === 2}>{v}</SmallCell>
                        )),
                      ])}
                    </SmallSheet>
                    <InputTip>데이터입력<br />50까지만</InputTip>
                    <ErrorBox>
                      <ErrorTitle><span>데이터입력</span><span>×</span></ErrorTitle>
                      <ErrorMessage>
                        <ErrorDot><X size={6} /></ErrorDot>
                        데이터값이는 50의 미만을 개만합니다.
                      </ErrorMessage>
                      <ErrorButtons>
                        <ErrorButton $primary>다시 시도(R)</ErrorButton>
                        <ErrorButton>취소</ErrorButton>
                        <ErrorButton>도움말(H)</ErrorButton>
                      </ErrorButtons>
                    </ErrorBox>
                  </SmallSheetWrap>
                  <Line $bullet>차동 필터를 이용하여 '6월'이 20 이상 30 미만인 데이터 행만 표시되도록 필터를 설정</Line>
                  <FootRule />
                  <FootRow>
                    <FootBlock $w={159}>copyrights(c) 컴활 특급 도우미 잘생긴이미남</FootBlock>
                    <FootBlock $w={30}>- 42 -</FootBlock>
                    <FootBlock $w={90}>강의는 addto.co.kr</FootBlock>
                  </FootRow>
                </Sheet>
              </DocArea>
              <HwpTabs>
                컴활1급실기
                <HwpTabAdd>+</HwpTabAdd>
              </HwpTabs>
              <HwpStatus>
                <span>41/115쪽</span><span>7단</span><span>10줄</span><span>1칸</span><span>글자 겹치기</span>
                <span>16/25 구역</span><span>삽입</span><span>변경 내용 [기록 중지]</span>
              </HwpStatus>
            </Hwp>
          </Video>
          <Gap />
        </Main>
        <Side>
          <SideBlock $h={23} $c="#2c2c2c" />
          <SideBlock $h={584} $c="#171717" />
          <SideBlock $h={75} $c="#232323" />
        </Side>
      </Stage>
      <Bottom>
        <BottomLeft />
      </Bottom>
    </Page>
  );
}
